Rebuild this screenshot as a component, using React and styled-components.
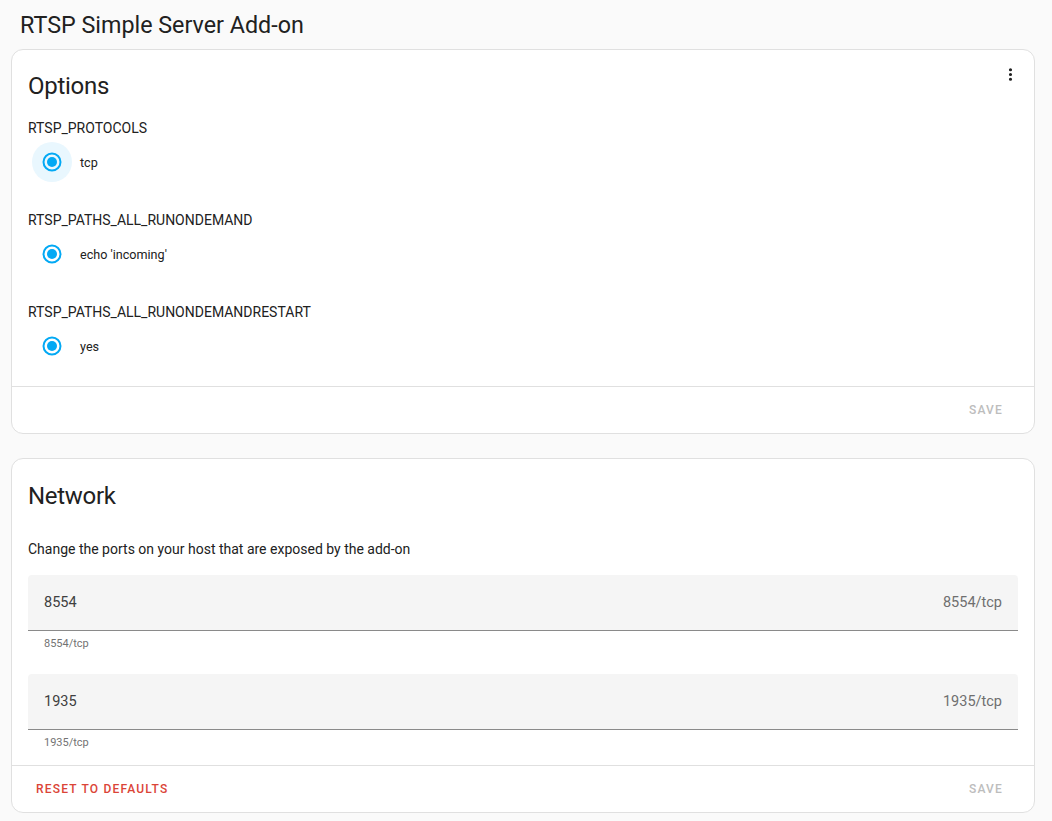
import React from "react";
import styled, { createGlobalStyle } from "styled-components";

const Global = createGlobalStyle`
  html, body { margin: 0; padding: 0; background: #fafafa; }
  body { font-family: Roboto, "Noto Sans", sans-serif; color: #212121; -webkit-font-smoothing: antialiased; }
`;

const Page = styled.div`
  padding: 0 17px 0 11px;
  display: flex;
  flex-direction: column;
`;

const PageTitle = styled.h1`
  margin: 0;
  padding: 9px 0 0 9px;
  height: 49px;
  box-sizing: border-box;
  font-size: 23.3px;
  font-weight: 400;
  line-height: 32px;
  color: #212121;
`;

const Card = styled.section`
  position: relative;
  background: #fff;
  border: 1px solid #e0e0e0;
  border-radius: 12px;
  margin-bottom: ${(p) => p.$mb || 0}px;
  display: flex;
  flex-direction: column;
`;

const CardHeader = styled.h2`
  margin: 0;
  font-size: 24px;
  font-weight: 400;
  line-height: 48px;
  letter-spacing: -0.012em;
  padding: ${(p) => p.$pt ?? 12}px 16px ${(p) => p.$pb ?? 16}px;
  color: #212121;
`;

const MenuButton = styled.button`
  position: absolute;
  top: 12px;
  right: 12px;
  width: 24px;
  height: 24px;
  padding: 0;
  border: 0;
  background: none;
  display: flex;
  align-items: center;
  justify-content: center;
  color: #212121;
`;

const CardContent = styled.div`
  padding: 0 16px ${(p) => p.$pb ?? 16}px;
  display: flex;
  flex-direction: column;
`;

const Option = styled.div`
  display: flex;
  flex-direction: column;
  margin-bottom: ${(p) => p.$mb}px;
`;

const OptionLabel = styled.div`
  font-size: 14px;
  line-height: 20px;
  color: #212121;
  height: 20px;
`;

const RadioRow = styled.label`
  display: flex;
  align-items: center;
  height: 48px;
`;

const RadioHit = styled.span`
  width: 40px;
  height: 40px;
  margin-left: 4px;
  border-radius: 50%;
  background: ${(p) => (p.$focus ? "#e9f7fe" : "transparent")};
  display: flex;
  align-items: center;
  justify-content: center;
`;

const RadioLabel = styled.span`
  margin-left: 8px;
  font-size: 12.6px;
  color: #212121;
`;

const Divider = styled.div`
  border-top: 1px solid #e0e0e0;
`;

const Actions = styled.div`
  display: flex;
  justify-content: space-between;
  align-items: center;
  padding: 5px 16px;
  height: 46px;
  box-sizing: border-box;
`;

const TextButton = styled.button`
  border: 0;
  background: none;
  padding: 0 8px;
  height: 36px;
  font-family: Roboto, sans-serif;
  font-size: 12px;
  font-weight: 500;
  letter-spacing: 0.1em;
  text-transform: uppercase;
  color: ${(p) => p.$color};
  margin-left: ${(p) => (p.$right ? "auto" : "0")};
  margin-right: ${(p) => (p.$right ? "7px" : "0")};
`;

const Description = styled.p`
  margin: 0 0 16px;
  font-size: 14px;
  line-height: 20px;
  color: #212121;
`;

const Field = styled.div`
  display: flex;
  flex-direction: column;
  margin-bottom: ${(p) => p.$mb}px;
`;

const FieldBox = styled.div`
  height: 56px;
  box-sizing: border-box;
  background: #f5f5f5;
  border-radius: 4px 4px 0 0;
  border-bottom: 1px solid #8a8a8a;
  display: flex;
  align-items: center;
  justify-content: space-between;
  padding: 0 16px;
  font-size: 14.5px;
`;

const FieldValue = styled.span`
  color: #404040;
`;

const FieldSuffix = styled.span`
  color: #6f6f6f;
`;

const Helper = styled.div`
  padding: 5px 16px 0;
  font-size: 11px;
  line-height: 16px;
  color: #737373;
  height: 19px;
`;

const Radio = ({ focus }) => (
  <RadioHit $focus={focus}>
    <svg width="20" height="20" viewBox="0 0 20 20">
      <circle cx="10" cy="10" r="8.5" fill="none" stroke="#03a9f4" strokeWidth="2" />
      <circle cx="10" cy="10" r="5" fill="#03a9f4" />
    </svg>
  </RadioHit>
);

const options = [
  { name: "RTSP_PROTOCOLS", value: "tcp", focus: true },
  { name: "RTSP_PATHS_ALL_RUNONDEMAND", value: "echo 'incoming'" },
  { name: "RTSP_PATHS_ALL_RUNONDEMANDRESTART", value: "yes" },
];

const ports = [
  { value: "8554", hint: "8554/tcp" },
  { value: "1935", hint: "1935/tcp" },
];

export default function App() {
  return (
    <>
      <Global />
      <Page>
        <PageTitle>RTSP Simple Server Add-on</PageTitle>
        <Card $mb={24}>
          <CardHeader $pb={8}>Options</CardHeader>
          <MenuButton aria-label="menu">
            <svg width="19" height="19" viewBox="0 0 24 24" fill="currentColor">
              <path d="M12,16A2,2 0 0,1 14,18A2,2 0 0,1 12,20A2,2 0 0,1 10,18A2,2 0 0,1 12,16M12,10A2,2 0 0,1 14,12A2,2 0 0,1 12,14A2,2 0 0,1 10,12A2,2 0 0,1 12,10M12,4A2,2 0 0,1 14,6A2,2 0 0,1 12,8A2,2 0 0,1 10,6A2,2 0 0,1 12,4Z" />
            </svg>
          </MenuButton>
          <CardContent $pb={0}>
            {options.map((o, i) => (
              <Option key={o.name} $mb={i < options.length - 1 ? 24 : 16}>
                <OptionLabel>{o.name}</OptionLabel>
                <RadioRow>
                  <Radio focus={o.focus} />
                  <RadioLabel>{o.value}</RadioLabel>
                </RadioRow>
              </Option>
            ))}
          </CardContent>
          <Divider />
          <Actions>
            <TextButton $color="#bdbdbd" $right>Save</TextButton>
          </Actions>
        </Card>
        <Card>
          <CardHeader $pt={13} $pb={19}>Network</CardHeader>
          <CardContent $pb={0}>
            <Description>Change the ports on your host that are exposed by the add-on</Description>
            {ports.map((p, i) => (
              <Field key={p.value} $mb={i < ports.length - 1 ? 19 : 11}>
                <FieldBox>
                  <FieldValue>{p.value}</FieldValue>
                  <FieldSuffix>{p.hint}</FieldSuffix>
                </FieldBox>
                <Helper>{p.hint}</Helper>
              </Field>
            ))}
          </CardContent>
          <Divider />
          <Actions>
            <TextButton $color="#db4437">Reset to defaults</TextButton>
            <TextButton $color="#bdbdbd" $right>Save</TextButton>
          </Actions>
        </Card>
      </Page>
    </>
  );
}
